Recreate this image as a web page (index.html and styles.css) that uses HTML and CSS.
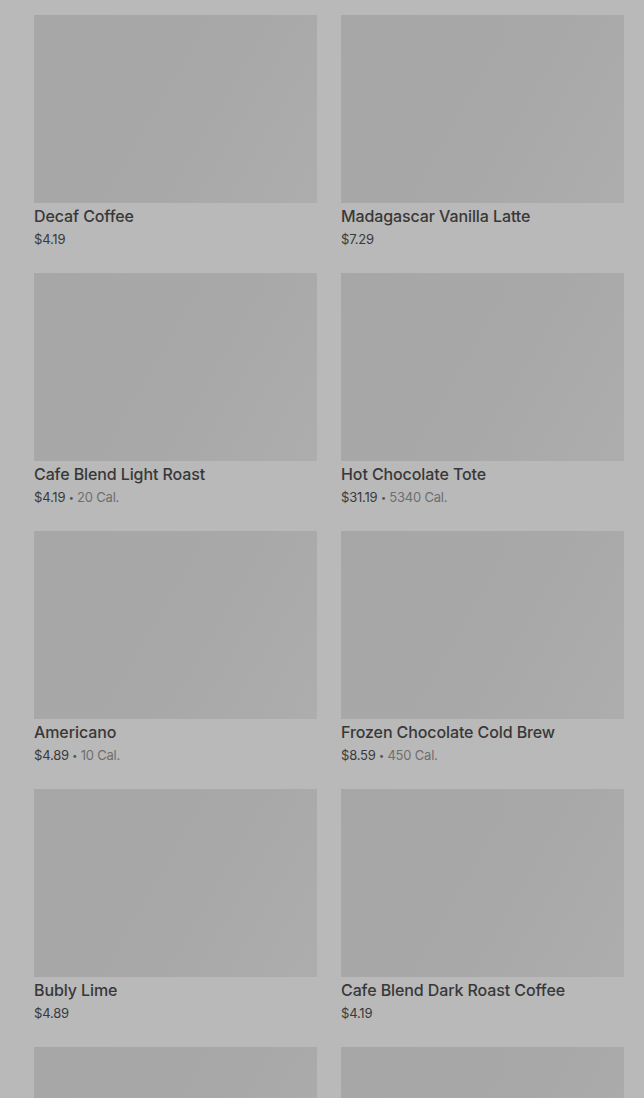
FILE: index.html
```html
<!DOCTYPE html>
<html lang="en">
<head>
  <meta charset="UTF-8">
  <meta name="viewport" content="width=device-width, initial-scale=1.0">
  <title>Menu</title>
  <link rel="stylesheet" href="styles.css">
</head>
<body>
  <div class="grid">
    <div class="item">
      <div class="thumb"></div>
      <div class="name">Decaf Coffee</div>
      <div class="meta">$4.19</div>
    </div>
    <div class="item">
      <div class="thumb"></div>
      <div class="name">Madagascar Vanilla Latte</div>
      <div class="meta">$7.29</div>
    </div>
    <div class="item">
      <div class="thumb"></div>
      <div class="name">Cafe Blend Light Roast</div>
      <div class="meta">$4.19 <span class="dot">•</span> <span class="cal">20 Cal.</span></div>
    </div>
    <div class="item">
      <div class="thumb"></div>
      <div class="name">Hot Chocolate Tote</div>
      <div class="meta">$31.19 <span class="dot">•</span> <span class="cal">5340 Cal.</span></div>
    </div>
    <div class="item">
      <div class="thumb"></div>
      <div class="name">Americano</div>
      <div class="meta">$4.89 <span class="dot">•</span> <span class="cal">10 Cal.</span></div>
    </div>
    <div class="item">
      <div class="thumb"></div>
      <div class="name">Frozen Chocolate Cold Brew</div>
      <div class="meta">$8.59 <span class="dot">•</span> <span class="cal">450 Cal.</span></div>
    </div>
    <div class="item">
      <div class="thumb"></div>
      <div class="name">Bubly Lime</div>
      <div class="meta">$4.89</div>
    </div>
    <div class="item">
      <div class="thumb"></div>
      <div class="name">Cafe Blend Dark Roast Coffee</div>
      <div class="meta">$4.19</div>
    </div>
    <div class="item">
      <div class="thumb"></div>
    </div>
    <div class="item">
      <div class="thumb"></div>
    </div>
  </div>
</body>
</html>
```

FILE: styles.css
```css
* {
  margin: 0;
  padding: 0;
  box-sizing: border-box;
}
html, body {
  background: #b9b9b9;
  font-family: Inter, 'Noto Sans', sans-serif;
  color: #363636;
  overflow: hidden;
}
.grid {
  display: grid;
  grid-template-columns: 283px 283px;
  column-gap: 24px;
  row-gap: 24px;
  padding: 15px 20px 0 34px;
}
.item {
  height: 234px;
}
.thumb {
  height: 188px;
  background: linear-gradient(120deg, #a7a7a7 0%, #a8a8a8 55%, #adadad 100%);
}
.name {
  font-size: 16px;
  font-weight: 500;
  line-height: 24px;
  padding-top: 1px;
  color: #383838;
  letter-spacing: -0.1px;
}
.meta {
  font-size: 13px;
  line-height: 21px;
  padding-top: 1px;
  color: #3a3a3a;
  letter-spacing: -0.2px;
}
.dot {
  font-size: 9px;
  line-height: 0;
  vertical-align: 1px;
  color: #555;
}
.cal {
  color: #6e6e6e;
}
```
